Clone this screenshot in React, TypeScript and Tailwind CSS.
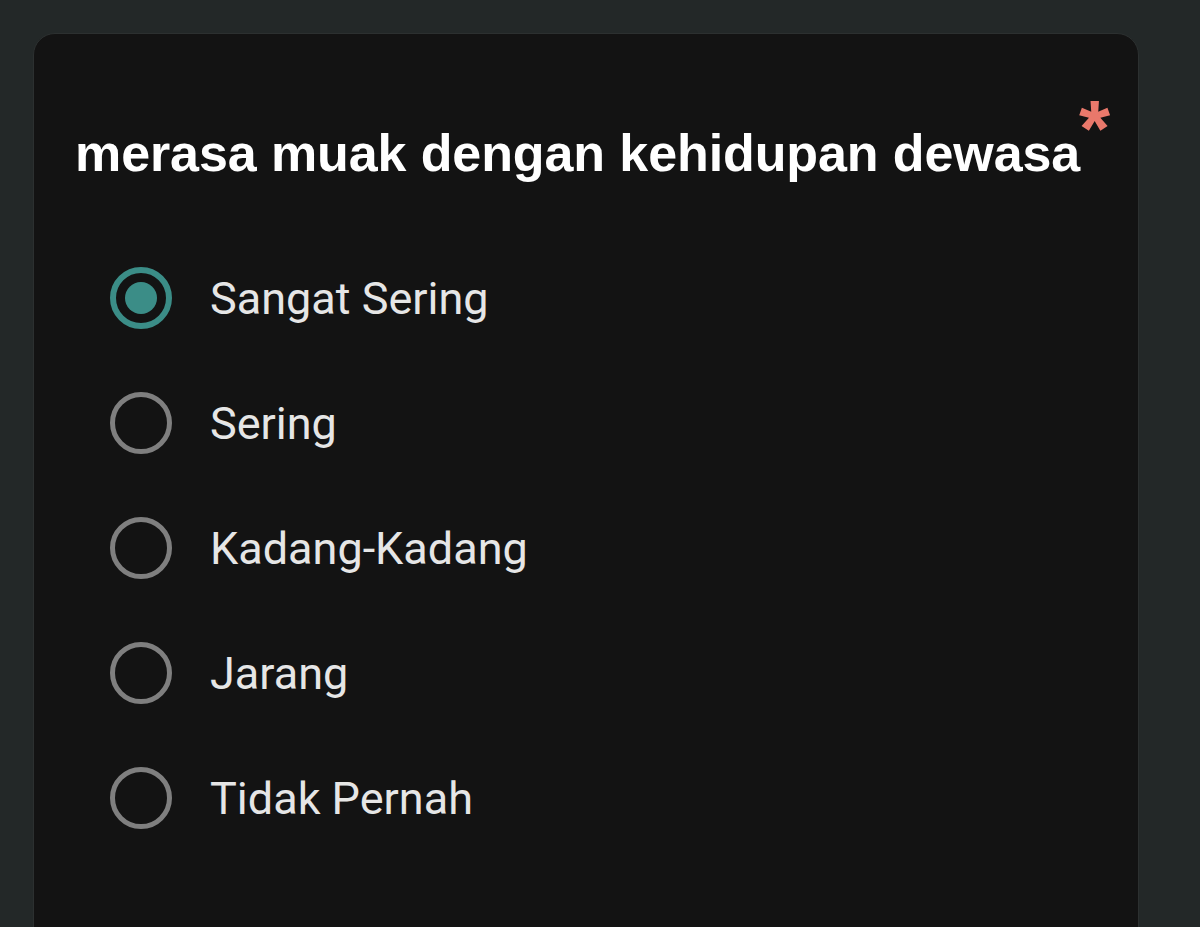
import { useState } from 'react';

const options = ['Sangat Sering', 'Sering', 'Kadang-Kadang', 'Jarang', 'Tidak Pernah'];

function Radio({ checked }: { checked: boolean }) {
  return (
    <span
      className={
        checked
          ? 'flex items-center justify-center w-[62px] h-[62px] rounded-full border-[6px] border-[#3b8d87]'
          : 'flex items-center justify-center w-[62px] h-[62px] rounded-full border-[5px] border-[#7f7f7f]'
      }
    >
      {checked && <span className="block w-[32px] h-[32px] rounded-full bg-[#3b8d87]" />}
    </span>
  );
}

export default function App() {
  const [value, setValue] = useState(options[0]);

  return (
    <div className="w-[1200px] h-[927px] overflow-hidden bg-[#232828] pt-[33px] pl-[33px] pr-[61px]">
      <div className="h-[940px] rounded-[22px] bg-[#131313] border border-[#2c3030] pl-[41px] pt-[93px]">
        {/* Question title */}
        <div className="relative inline-block">
          <h1 className="font-['Liberation_Sans',sans-serif] font-bold text-[52px] leading-none tracking-[-0.1px] text-white">
            merasa muak dengan kehidupan dewasa
          </h1>
          <span className="absolute -right-[30px] -top-[38px] font-['Liberation_Sans',sans-serif] font-bold text-[80px] leading-none text-[#e9786b]">
            *
          </span>
        </div>

        {/* Options */}
        <div className="flex flex-col gap-[63px] mt-[88px] pl-[35px]">
          {options.map((opt) => (
            <button
              key={opt}
              onClick={() => setValue(opt)}
              className="flex items-center gap-[38px] text-left"
            >
              <Radio checked={value === opt} />
              <span className="font-['Roboto',sans-serif] text-[45px] leading-none text-[#e6e6e6]">{opt}</span>
            </button>
          ))}
        </div>
      </div>
    </div>
  );
}
